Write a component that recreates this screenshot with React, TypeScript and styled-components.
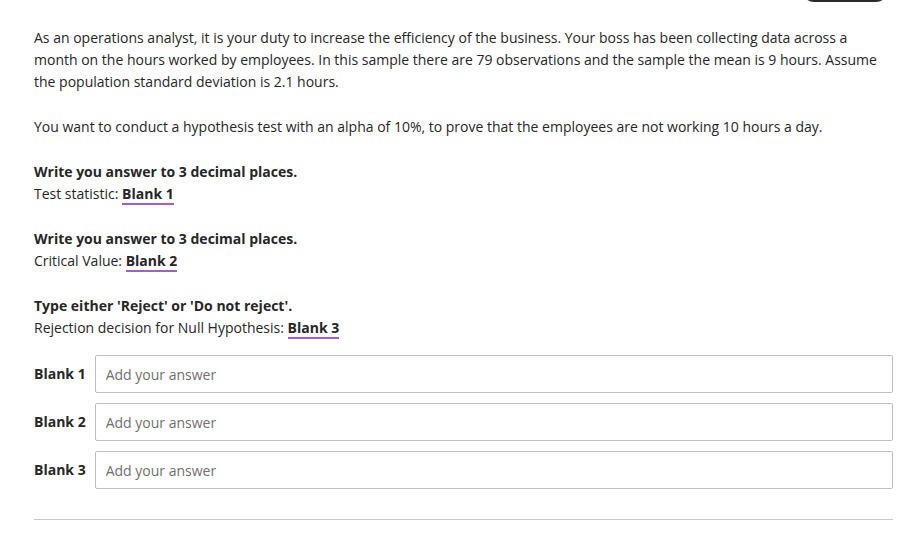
import { Fragment } from 'react';
import styled, { createGlobalStyle } from 'styled-components';

const GlobalStyle = createGlobalStyle`
  body {
    margin: 0;
    background: #ffffff;
    font-family: "Open Sans", "Liberation Sans", sans-serif;
    color: #262626;
  }
`;

const Page = styled.div`
  padding: 0 24px 0 34px;
  font-size: 14px;
  line-height: 22px;
`;

const TopBar = styled.div`
  display: flex;
  justify-content: flex-end;
  padding-right: 5px;
  height: 2px;
`;

const PillButton = styled.button`
  margin-top: -30px;
  width: 86px;
  height: 32px;
  border: 2px solid #2b2b2b;
  border-radius: 12px;
  background: #fff;
`;

const Question = styled.div`
  margin-top: 25px;
`;

const Para = styled.p`
  margin: 0 0 23px;
`;

const Strong = styled.strong`
  font-weight: 700;
`;

const BlankRef = styled.span`
  font-weight: 700;
  border-bottom: 2px solid #a45fc6;
`;

const BlankGrid = styled.div`
  display: grid;
  grid-template-columns: auto 1fr;
  column-gap: 9px;
  row-gap: 10px;
  align-items: center;
  margin-top: -7px;
`;

const BlankLabel = styled.label`
  font-weight: 700;
`;

const AnswerInput = styled.input`
  box-sizing: border-box;
  height: 38px;
  width: 100%;
  border: 1px solid #bdbdbd;
  border-radius: 2px;
  padding: 0 10px;
  font-family: "Open Sans", "Liberation Sans", sans-serif;
  font-size: 14px;
  color: #262626;
  &::placeholder {
    color: #6f6f6f;
  }
`;

const Divider = styled.hr`
  margin: 30px 0 0;
  border: 0;
  border-top: 1px solid #c8c8c8;
`;

const blanks = ['Blank 1', 'Blank 2', 'Blank 3'];

export default function App() {
  return (
    <Page>
      <GlobalStyle />
      <TopBar>
        <PillButton aria-label="menu" />
      </TopBar>
      <Question>
        <Para>
          As an operations analyst, it is your duty to increase the efficiency of the business. Your boss has been
          collecting data across a month on the hours worked by employees. In this sample there are 79 observations
          and the sample the mean is 9 hours. Assume the population standard deviation is 2.1 hours.
        </Para>
        <Para>
          You want to conduct a hypothesis test with an alpha of 10%, to prove that the employees are not working 10
          hours a day.
        </Para>
        <Para>
          <Strong>Write you answer to 3 decimal places.</Strong>
          <br />
          Test statistic: <BlankRef>Blank 1</BlankRef>
        </Para>
        <Para>
          <Strong>Write you answer to 3 decimal places.</Strong>
          <br />
          Critical Value: <BlankRef>Blank 2</BlankRef>
        </Para>
        <Para>
          <Strong>Type either 'Reject' or 'Do not reject'.</Strong>
          <br />
          Rejection decision for Null Hypothesis: <BlankRef>Blank 3</BlankRef>
        </Para>
      </Question>
      <BlankGrid>
        {blanks.map((b) => (
          <Fragment key={b}>
            <BlankLabel>{b}</BlankLabel>
            <AnswerInput placeholder="Add your answer" />
          </Fragment>
        ))}
      </BlankGrid>
      <Divider />
    </Page>
  );
}
